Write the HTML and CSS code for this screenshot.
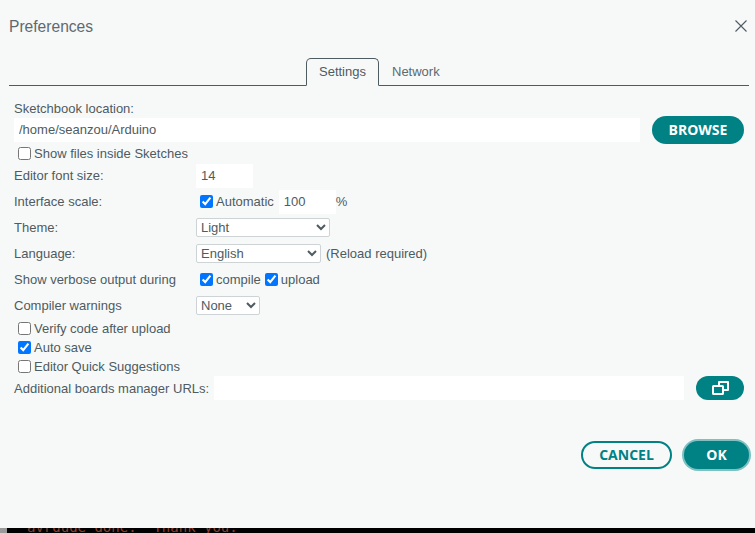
FILE: index.html
```html
<!DOCTYPE html>
<html lang="en">
<head>
<meta charset="utf-8">
<title>Preferences</title>
<link rel="stylesheet" href="styles.css">
</head>
<body>
<div class="dialog">
  <header class="titlebar">
    <h1 class="title">Preferences</h1>
    <svg class="close" width="14" height="14" viewBox="0 0 14 14" aria-label="Close"><path d="M1.5 1.5 12.5 12.5M12.5 1.5 1.5 12.5" fill="none" stroke="#4e5b61" stroke-width="1.1"/></svg>
  </header>
  <nav class="tabs">
    <div class="tab tab-active">Settings</div>
    <div class="tab">Network</div>
  </nav>
  <main class="content">
    <div class="label-line">Sketchbook location:</div>
    <div class="location-row">
      <input class="field field-location" type="text" value="/home/seanzou/Arduino">
      <button class="btn btn-browse">BROWSE</button>
    </div>
    <label class="check-line"><input type="checkbox">Show files inside Sketches</label>
    <div class="row">
      <span class="row-label">Editor font size:</span>
      <input class="field field-small" type="text" value="14">
    </div>
    <div class="row">
      <span class="row-label">Interface scale:</span>
      <label class="inline-check"><input type="checkbox" checked>Automatic</label>
      <input class="field field-scale" type="text" value="100">
      <span class="unit">%</span>
    </div>
    <div class="row">
      <span class="row-label">Theme:</span>
      <select class="select select-theme"><option>Light</option></select>
    </div>
    <div class="row">
      <span class="row-label">Language:</span>
      <select class="select select-lang"><option>English</option></select>
      <span class="reload">(Reload required)</span>
    </div>
    <div class="row">
      <span class="row-label">Show verbose output during</span>
      <label class="inline-check"><input type="checkbox" checked>compile</label>
      <label class="inline-check"><input type="checkbox" checked>upload</label>
    </div>
    <div class="row">
      <span class="row-label">Compiler warnings</span>
      <select class="select select-warn"><option>None</option></select>
    </div>
    <div class="checks">
      <label class="check-line"><input type="checkbox">Verify code after upload</label>
      <label class="check-line"><input type="checkbox" checked>Auto save</label>
      <label class="check-line"><input type="checkbox">Editor Quick Suggestions</label>
    </div>
    <div class="urls-row">
      <span class="urls-label">Additional boards manager URLs:</span>
      <input class="field field-urls" type="text">
      <button class="btn btn-urls" aria-label="Edit URLs">
        <svg width="17" height="14" viewBox="0 0 17 14"><path d="M7 4V1H16V9H12" fill="none" stroke="#fff" stroke-width="2" stroke-linejoin="round"/><rect x="1" y="5" width="10" height="8" rx=".6" fill="none" stroke="#fff" stroke-width="2"/></svg>
      </button>
    </div>
  </main>
  <footer class="actions">
    <button class="btn btn-cancel">CANCEL</button>
    <button class="btn btn-ok">OK</button>
  </footer>
</div>
<div class="console"><span class="scroll-thumb"></span><pre class="console-text">avrdude done.  Thank you.</pre></div>
</body>
</html>
```
FILE: styles.css
```css
* { box-sizing: border-box; }
html, body { margin: 0; height: 100%; overflow: hidden; }
body {
  width: 755px;
  height: 533px;
  background: #000;
  font-family: "Liberation Sans", Arial, sans-serif;
  font-size: 13px;
  color: #4e5b61;
}
.dialog {
  height: 528px;
  background: #f7f9f9;
  padding: 0 5px 0 9px;
  display: flex;
  flex-direction: column;
}
.titlebar {
  height: 58px;
  display: flex;
  align-items: flex-start;
  justify-content: space-between;
  padding-top: 18px;
}
.title {
  margin: 0;
  font-size: 15.6px;
  font-weight: 400;
  line-height: 18px;
  color: #5d6a70;
}
.close { margin: 1px 2px 0 0; }
.tabs {
  height: 28px;
  width: 740px;
  display: flex;
  padding-left: 297px;
  border-bottom: 1px solid #4e5b61;
}
.tab {
  height: 28px;
  padding: 0 13px;
  line-height: 27px;
  color: #5d6a70;
}
.tab-active {
  width: 73px;
  border: 1px solid #4e5b61;
  border-bottom: 1px solid #f7f9f9;
  border-radius: 5px 5px 0 0;
  color: #4e5b61;
  text-align: center;
  padding: 0;
  line-height: 26px;
}
.content { padding: 15px 0 0 5px; }
.label-line { height: 15px; line-height: 16px; }
.location-row {
  display: flex;
  align-items: center;
  gap: 12px;
  height: 28px;
}
.field {
  height: 24px;
  border: 0;
  border-radius: 0;
  background: #fff;
  padding: 0 5px 2px;
  font: 13px "Liberation Sans", Arial, sans-serif;
  color: #4e5b61;
  outline: 0;
}
.field-location { width: 626px; }
.field-small { width: 57px; }
.field-scale { width: 57px; margin-left: 5px; }
.field-urls { width: 470px; margin-left: 5px; }
.btn {
  border: 0;
  border-radius: 14px;
  background: #008184;
  color: #fff;
  font: 700 14px/1 "Open Sans", sans-serif;
  padding: 0;
  height: 28px;
}
.btn-browse { width: 92px; }
.check-line {
  display: flex;
  align-items: center;
  height: 19px;
  padding-left: 4px;
}
.check-line input, .inline-check input {
  width: 13px;
  height: 13px;
  margin: 0 3px 0 0;
}
.row {
  display: flex;
  align-items: center;
  height: 26px;
  padding-bottom: 2px;
}
.row .field { margin-top: 2px; }
.row-label { width: 182px; flex: none; }
.inline-check {
  display: flex;
  align-items: center;
  padding-left: 4px;
}
.select {
  height: 19px;
  font: 13px "Liberation Sans", Arial, sans-serif;
  color: #4e5b61;
  background-color: #fff;
  border: 1px solid #ced4d6;
  border-radius: 2px;
  padding: 0;
}
.select-theme { width: 134px; }
.select-lang { width: 125px; }
.select-warn { width: 64px; }
.reload { margin-left: 5px; }
.urls-row {
  display: flex;
  align-items: center;
  height: 24px;
}
.urls-label { flex: none; }
.btn-urls {
  width: 48px;
  height: 24px;
  margin-left: 12px;
  display: flex;
  align-items: center;
  justify-content: center;
}
.actions {
  display: flex;
  justify-content: flex-end;
  align-items: center;
  gap: 12px;
  margin-top: 41px;
  width: 740px;
}
.btn-cancel {
  width: 91px;
  background: transparent;
  border: 2px solid #008184;
  color: #008184;
}
.btn-ok {
  width: 65px;
  box-shadow: 0 0 0 2px #7fc0c1;
}
.console {
  position: relative;
  height: 5px;
  overflow: hidden;
  background: #000;
}
.scroll-thumb {
  position: absolute;
  left: 0;
  top: 0;
  width: 7px;
  height: 5px;
  background: #9a9a9a;
}
.console-text {
  margin: 0;
  padding-left: 27px;
  font: 14px/16px "DejaVu Sans Mono", monospace;
  color: #8a4030;
  transform: translateY(-9px);
}
```
